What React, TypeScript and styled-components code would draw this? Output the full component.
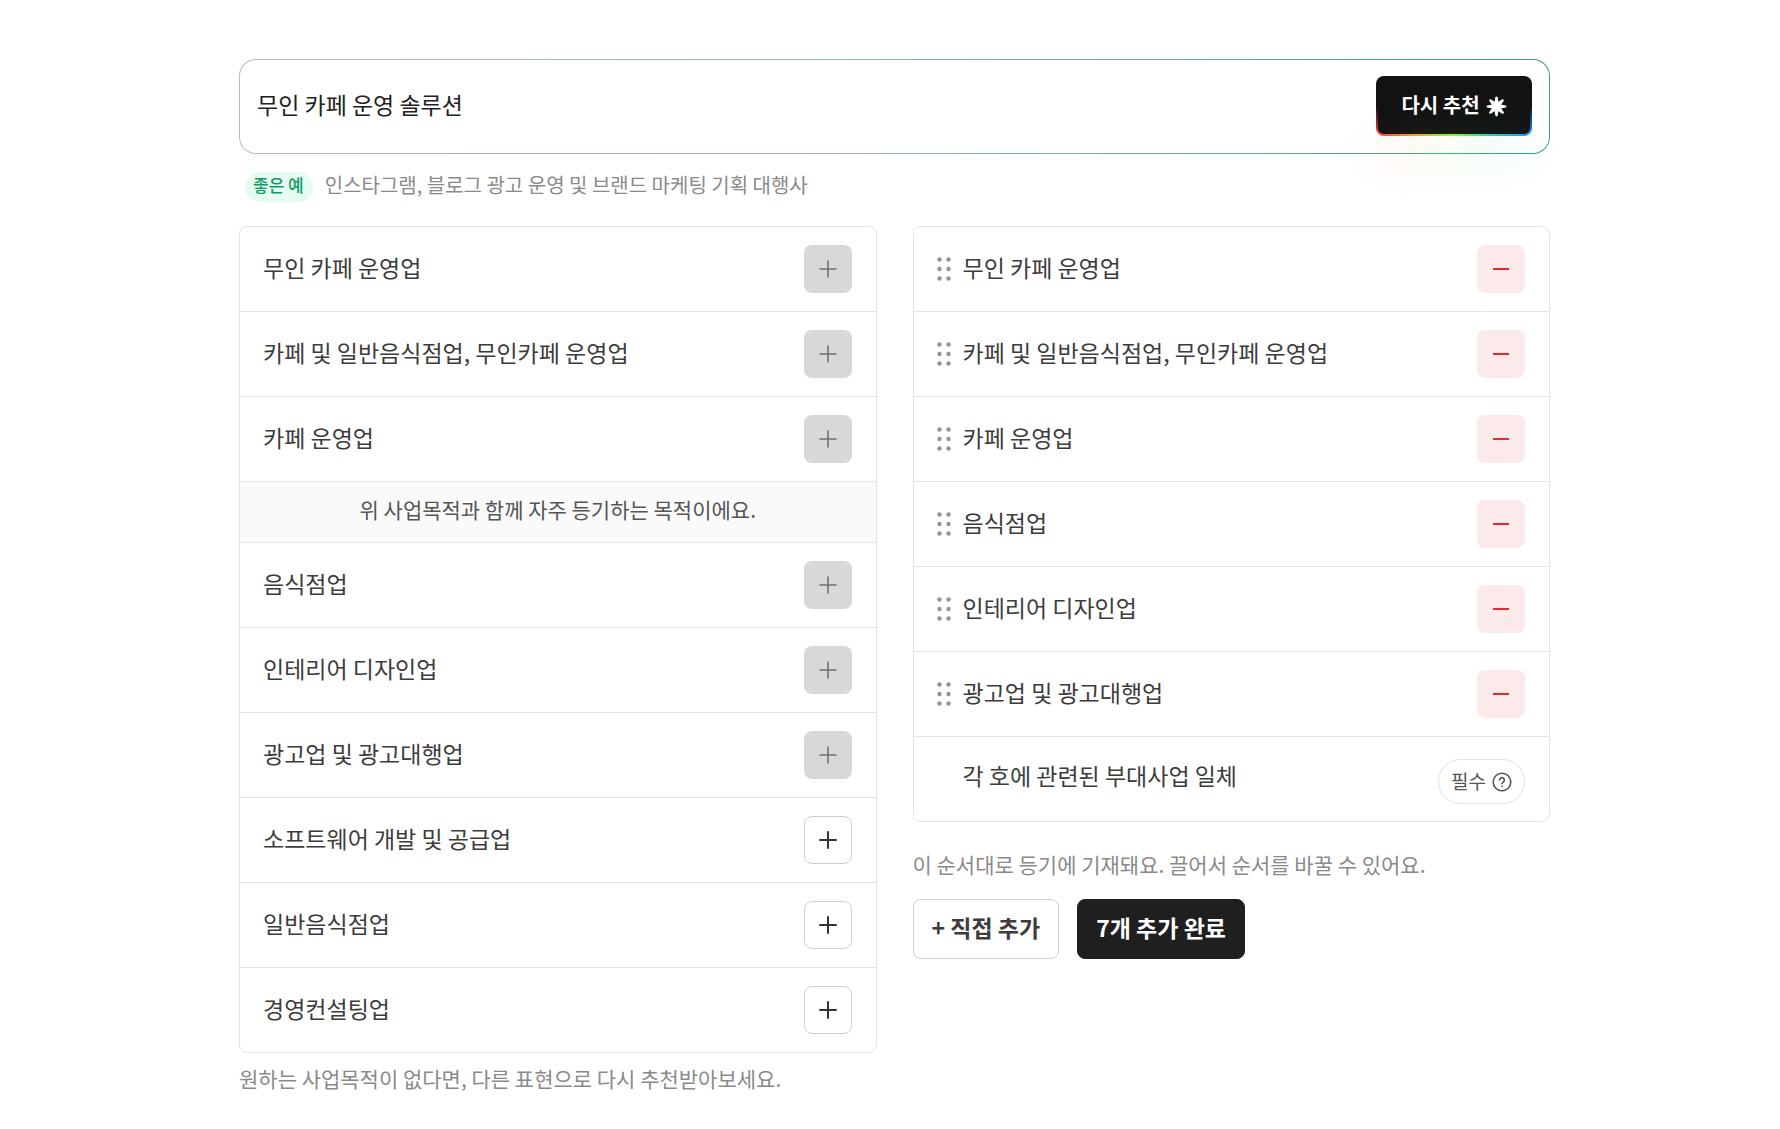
import React, { useState } from "react";
import styled, { createGlobalStyle } from "styled-components";

const GlobalStyle = createGlobalStyle`
  *, *::before, *::after { box-sizing: border-box; }
  body {
    margin: 0;
    background: #fff;
    color: #3c3c3c;
    font-family: "Noto Sans CJK KR", "Noto Sans", sans-serif;
  }
  button, input { font-family: inherit; margin: 0; }
`;

const Page = styled.main`
  padding: 59px 230px 28px 239px;
`;

const SearchBox = styled.form`
  display: flex;
  align-items: center;
  gap: 16px;
  padding: 16px 17px 17px 16px;
  border: 1px solid transparent;
  border-radius: 17px;
  background:
    linear-gradient(#fff, #fff) padding-box,
    linear-gradient(90deg, #b9bcbb 0%, #8dbda4 45%, #3ba272 100%) border-box;
`;

const SearchInput = styled.input`
  flex: 1;
  min-width: 0;
  padding: 0 0 4px 1px;
  border: 0;
  outline: 0;
  background: transparent;
  color: #222;
  font-size: 23px;
  line-height: 34px;
`;

const RecommendButton = styled.button`
  position: relative;
  display: flex;
  align-items: center;
  justify-content: center;
  gap: 6px;
  width: 156px;
  height: 60px;
  padding: 0;
  border: 2px solid transparent;
  border-radius: 8px;
  color: #fff;
  font-size: 20px;
  font-weight: 700;
  line-height: 30px;
  cursor: pointer;
  background:
    linear-gradient(#121213, #121213) padding-box,
    linear-gradient(#121213 50%, rgba(18, 18, 19, 0.4) 80%, rgba(18, 18, 19, 0) 96%) border-box,
    linear-gradient(90deg, #ff3b3b, #f0a030 25%, #7dff3c 50%, #2cc6b0 75%, #1e8fff) border-box;

  &::after {
    content: "";
    position: absolute;
    left: -12px;
    right: -12px;
    top: 50px;
    height: 44px;
    border-radius: 50%;
    background: linear-gradient(90deg, #ff3b3b, #f0a030 25%, #7df03c 50%, #2cd6c0 75%, #7cc0ff);
    filter: blur(18px);
    opacity: 0.07;
    pointer-events: none;
  }
`;

const Example = styled.p`
  display: flex;
  align-items: center;
  gap: 12px;
  margin: 18px 0 24px;
  padding-left: 6px;
  color: #8a8a8a;
  font-size: 20px;
  line-height: 30px;
`;

const Badge = styled.span`
  padding: 0 9px 4px 8px;
  border-radius: 15px;
  background: #e6fcf3;
  color: #0a9c62;
  font-size: 17px;
  font-weight: 500;
  line-height: 26px;
`;

const ExampleText = styled.span`
  padding-bottom: 4px;
  line-height: 26px;
`;

const Columns = styled.div`
  display: grid;
  grid-template-columns: 1fr 1fr;
  gap: 36px;
  align-items: start;
`;

const List = styled.ul`
  margin: 0;
  padding: 0;
  list-style: none;
  border: 1px solid #e3e3e3;
  border-radius: 8px;
  overflow: hidden;
`;

const Row = styled.li`
  display: flex;
  align-items: center;
  justify-content: space-between;
  min-height: 84px;
  padding: 17px 24px 17px 23px;

  & + & { min-height: 85px; border-top: 1px solid #e3e3e3; }
`;

const Label = styled.span`
  flex: 1;
  padding-bottom: 4px;
  font-size: 23px;
  line-height: 34px;
`;

const RequiredRow = styled(Row)`
  align-items: flex-end;
  padding-left: 49px;
`;

const RequiredLabel = styled(Label)`
  align-self: flex-start;
  line-height: 42px;
`;

const Divider = styled.li`
  padding: 11px 24px 16px;
  border-top: 1px solid #e3e3e3;
  border-bottom: 1px solid #e3e3e3;
  background: #fafafa;
  color: #555;
  font-size: 21px;
  line-height: 33px;
  text-align: center;
`;

const IconButton = styled.button<{ $tone: "plain" | "muted" | "danger" }>`
  display: grid;
  place-items: center;
  width: 48px;
  height: 48px;
  padding: 0;
  border-radius: 8px;
  border: 1px solid ${(p) => (p.$tone === "plain" ? "#cfcfcf" : "transparent")};
  background: ${(p) => ({ plain: "#fff", muted: "#d8d8d8", danger: "#fce9e9" })[p.$tone]};
  color: ${(p) => ({ plain: "#333", muted: "#6c6c6c", danger: "#e02b2b" })[p.$tone]};
  cursor: ${(p) => (p.$tone === "muted" ? "default" : "pointer")};
`;

const Handle = styled.svg`
  flex: none;
  margin-right: 12px;
  fill: #949494;
  cursor: grab;
`;

const RequiredTag = styled.button`
  display: flex;
  align-items: center;
  gap: 6px;
  height: 45px;
  padding: 0 12px;
  border: 1px solid #dde3ea;
  border-radius: 23px;
  background: #fff;
  color: #555;
  font-size: 19px;
  line-height: 28px;
  cursor: pointer;
`;

const ButtonText = styled.span`
  display: block;
  padding-bottom: 2px;
`;

const Note = styled.p<{ $spaced?: boolean }>`
  margin: ${(p) => (p.$spaced ? "26px 0 19px" : "9px 0 0")};
  color: #8a8a8a;
  font-size: 21px;
  line-height: 32px;
`;

const Actions = styled.div`
  display: flex;
  gap: 18px;
`;

const ActionButton = styled.button<{ $primary?: boolean }>`
  height: 60px;
  padding: 0 18px 5px;
  border: 1px solid ${(p) => (p.$primary ? "#1f1f1f" : "#d0d0d0")};
  border-radius: 8px;
  background: ${(p) => (p.$primary ? "#1f1f1f" : "#fff")};
  color: ${(p) => (p.$primary ? "#fff" : "#3c3c3c")};
  font-size: 23px;
  font-weight: 700;
  line-height: 34px;
  cursor: pointer;
`;

const PlusIcon = ({ bold }: { bold?: boolean }) => (
  <svg width="18" height="18" viewBox="0 0 18 18" stroke="currentColor" strokeWidth={bold ? 2 : 1.5} strokeLinecap="round" aria-hidden="true">
    <path d="M9 1v16M1 9h16" />
  </svg>
);

const MinusIcon = () => (
  <svg width="18" height="18" viewBox="0 0 18 18" stroke="currentColor" strokeWidth="2" aria-hidden="true">
    <path d="M1 9h16" />
  </svg>
);

const DragHandle = () => (
  <Handle width="14" height="24" viewBox="0 0 14 24" aria-hidden="true">
    {[2.5, 12, 21.5].map((y) => (
      <React.Fragment key={y}>
        <circle cx="2.5" cy={y} r="2.2" />
        <circle cx="11.5" cy={y} r="2.2" />
      </React.Fragment>
    ))}
  </Handle>
);

const StarIcon = () => (
  <svg width="21" height="21" viewBox="-10.5 -10.5 21 21" fill="#fff" aria-hidden="true">
    <circle r="5" />
    {[0, 45, 90, 135, 180, 225, 270, 315].map((a) => (
      <path key={a} transform={`rotate(${a})`} d="M-2 -4.2L-1.1 -9.2Q0 -10.8 1.1 -9.2L2 -4.2Z" />
    ))}
  </svg>
);

const QuestionIcon = () => (
  <svg width="20" height="20" viewBox="0 0 20 20" fill="none" stroke="currentColor" strokeWidth="1.6" strokeLinecap="round" aria-hidden="true">
    <circle cx="10" cy="10" r="8.8" />
    <path d="M7.6 8a2.4 2.4 0 1 1 3.6 2.1c-.8.5-1.2.9-1.2 1.6" />
    <circle cx="10" cy="14.3" r=".5" fill="currentColor" strokeWidth=".8" />
  </svg>
);

const recommended = ["무인 카페 운영업", "카페 및 일반음식점업, 무인카페 운영업", "카페 운영업"];
const related = ["음식점업", "인테리어 디자인업", "광고업 및 광고대행업", "소프트웨어 개발 및 공급업", "일반음식점업", "경영컨설팅업"];
const chosen = [...recommended, ...related.slice(0, 3)];

const PurposeRow = ({ name }: { name: string }) => {
  const added = chosen.includes(name);
  return (
    <Row>
      <Label>{name}</Label>
      <IconButton type="button" $tone={added ? "muted" : "plain"} disabled={added} aria-label={`${name} 추가`}>
        <PlusIcon bold={!added} />
      </IconButton>
    </Row>
  );
};

export default function App() {
  const [query, setQuery] = useState("무인 카페 운영 솔루션");

  return (
    <>
      <GlobalStyle />
      <Page>
        <SearchBox onSubmit={(e) => e.preventDefault()}>
          <SearchInput aria-label="사업 내용" value={query} onChange={(e) => setQuery(e.target.value)} />
          <RecommendButton type="submit">
            <ButtonText>다시 추천</ButtonText>
            <StarIcon />
          </RecommendButton>
        </SearchBox>
        <Example>
          <Badge>좋은 예</Badge>
          <ExampleText>인스타그램, 블로그 광고 운영 및 브랜드 마케팅 기획 대행사</ExampleText>
        </Example>
        <Columns>
          <section>
            <List>
              {recommended.map((name) => (
                <PurposeRow key={name} name={name} />
              ))}
              <Divider>위 사업목적과 함께 자주 등기하는 목적이에요.</Divider>
              {related.map((name) => (
                <PurposeRow key={name} name={name} />
              ))}
            </List>
            <Note>원하는 사업목적이 없다면, 다른 표현으로 다시 추천받아보세요.</Note>
          </section>
          <section>
            <List>
              {chosen.map((name) => (
                <Row key={name}>
                  <DragHandle />
                  <Label>{name}</Label>
                  <IconButton type="button" $tone="danger" aria-label={`${name} 삭제`}>
                    <MinusIcon />
                  </IconButton>
                </Row>
              ))}
              <RequiredRow>
                <RequiredLabel>각 호에 관련된 부대사업 일체</RequiredLabel>
                <RequiredTag type="button">
                  <ButtonText>필수</ButtonText>
                  <QuestionIcon />
                </RequiredTag>
              </RequiredRow>
            </List>
            <Note $spaced>이 순서대로 등기에 기재돼요. 끌어서 순서를 바꿀 수 있어요.</Note>
            <Actions>
              <ActionButton type="button">+ 직접 추가</ActionButton>
              <ActionButton type="button" $primary>
                7개 추가 완료
              </ActionButton>
            </Actions>
          </section>
        </Columns>
      </Page>
    </>
  );
}
